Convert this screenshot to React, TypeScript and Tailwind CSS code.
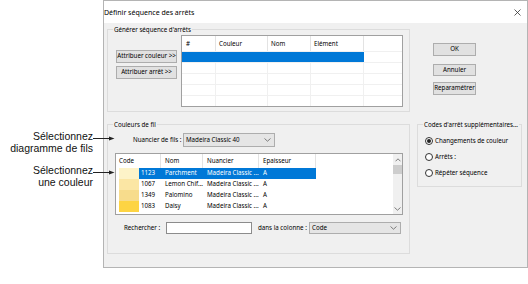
import React from "react";

function Chevron({ className = "" }: { className?: string }) {
  return (
    <svg width="7" height="4" viewBox="0 0 7 4" className={className}>
      <path d="M0.5 0.5 L3.5 3.2 L6.5 0.5" fill="none" stroke="#606060" strokeWidth="0.8" />
    </svg>
  );
}

function ChevronUp({ className = "" }: { className?: string }) {
  return (
    <svg width="6" height="4" viewBox="0 0 6 4" className={className}>
      <path d="M0.5 3.3 L3 0.8 L5.5 3.3" fill="none" stroke="#606060" strokeWidth="0.8" />
    </svg>
  );
}

function ArrowRight() {
  return (
    <svg width="22" height="5" viewBox="0 0 22 5" className="absolute left-full top-[5px]">
      <line x1="0" y1="2.5" x2="17" y2="2.5" stroke="#222" strokeWidth="1" />
      <path d="M16 0.5 L21.5 2.5 L16 4.5 Z" fill="#222" />
    </svg>
  );
}

function Group({
  label,
  className = "",
  children,
}: {
  label: string;
  className?: string;
  children?: React.ReactNode;
}) {
  return (
    <fieldset className={`border border-[#dcdcdc] min-w-0 ${className}`}>
      <legend className="ml-[5px] px-[1px] text-[6.2px] leading-[9px] text-black whitespace-nowrap">{label}</legend>
      {children}
    </fieldset>
  );
}

function Btn({ children, className = "" }: { children: React.ReactNode; className?: string }) {
  return (
    <div
      className={`flex items-center justify-center bg-[#e1e1e1] border border-[#adadad] text-[6.2px] leading-none text-black whitespace-nowrap ${className}`}
    >
      {children}
    </div>
  );
}

function Radio({ checked, label }: { checked?: boolean; label: string }) {
  return (
    <div className="h-[16px] flex items-center">
      <div className="w-[8px] h-[8px] rounded-full border border-[#333] bg-white flex items-center justify-center">
        {checked && <div className="w-[4px] h-[4px] rounded-full bg-[#222]" />}
      </div>
      <span className="ml-[2px] text-[6.2px] leading-none text-black whitespace-nowrap">{label}</span>
    </div>
  );
}

const topCols = [
  { w: "w-[34px]", label: "#", pl: "pl-[4px]" },
  { w: "w-[52px]", label: "Couleur", pl: "pl-[3px]" },
  { w: "w-[43px]", label: "Nom", pl: "pl-[3px]" },
  { w: "w-[53px]", label: "Elément", pl: "pl-[3px]" },
  { w: "w-[38px]", label: "", pl: "pl-[3px]" },
];

const threads = [
  { sw: "#fdf3c8", code: "1123", name: "Parchment", sel: true },
  { sw: "#fbe6a4", code: "1067", name: "Lemon Chif...", sel: false },
  { sw: "#f7dc8c", code: "1349", name: "Palomino", sel: false },
  { sw: "#fdd443", code: "1083", name: "Daisy", sel: false },
];

function Dialog() {
  return (
    <div className="w-[425px] h-[268px] shrink-0 border border-[#b4b4b4] bg-[#f0f0f0] flex flex-col">
      {/* title bar */}
      <div className="h-[22px] bg-white flex items-center justify-between pr-[6px] text-[7px] text-black">
        <span className="leading-none whitespace-nowrap">Définir séquence des arrêts</span>
        <svg width="7" height="7" viewBox="0 0 7 7">
          <path d="M0.5 0.5 L6.5 6.5 M6.5 0.5 L0.5 6.5" stroke="#333" strokeWidth="0.8" />
        </svg>
      </div>

      {/* body */}
      <div className="flex pl-[3px] pt-[2px]">
        {/* left column */}
        <div className="w-[303px] flex flex-col">
          <Group label="Générer séquence d'arrêts" className="h-[87px]">
            <div className="flex pl-[8px] pt-[1px]">
              <div className="w-[61px] flex flex-col gap-[3px] pt-[15px]">
                <Btn className="h-[13px]">Attribuer couleur &gt;&gt;</Btn>
                <Btn className="h-[13px]">Attribuer arrêt &gt;&gt;</Btn>
              </div>
              <div className="ml-[4px] w-[222px] h-[72px] border border-[#a0a0a0] bg-white flex flex-col">
                <div className="flex h-[15px]">
                  {topCols.map((c, i) => (
                    <div
                      key={i}
                      className={`${c.w} ${c.pl} h-full flex items-center text-[6.2px] text-black ${
                        i < 4 ? "border-r border-[#e3e3e3]" : ""
                      }`}
                    >
                      {c.label}
                    </div>
                  ))}
                </div>
                {[0, 1, 2, 3, 4].map((r) => (
                  <div key={r} className="flex h-[11px] border-t border-[#f0f0f0]">
                    {topCols.map((c, i) => (
                      <div
                        key={i}
                        className={`${c.w} h-full ${i < 4 ? "border-r" : ""} ${
                          r === 0 && i < 4 ? "bg-[#0078d7] border-[#0078d7]" : "border-[#f0f0f0]"
                        }`}
                      />
                    ))}
                  </div>
                ))}
              </div>
            </div>
          </Group>

          <Group label="Couleurs de fil" className="mt-[8px] h-[134px]">
            <div className="flex items-center mt-[4px] h-[14px] pl-[25px]">
              <span className="text-[6.2px] leading-none text-black w-[50px] whitespace-nowrap">Nuancier de fils :</span>
              <div className="w-[92px] h-[14px] bg-[#e5e5e5] border border-[#adadad] flex items-center justify-between pl-[2px] pr-[3px]">
                <span className="text-[6.2px] leading-none text-black whitespace-nowrap">Madeira Classic 40</span>
                <Chevron />
              </div>
            </div>

            <div className="ml-[7px] mt-[6px] w-[288px] h-[62px] border border-[#a0a0a0] bg-white flex">
              <div className="w-[277px] flex flex-col">
                <div className="flex h-[14px] text-[6.2px] text-black">
                  <div className="w-[45px] pl-[3px] flex items-center border-r border-[#e3e3e3]">Code</div>
                  <div className="w-[42px] pl-[4px] flex items-center border-r border-[#e3e3e3]">Nom</div>
                  <div className="w-[56px] pl-[4px] flex items-center border-r border-[#e3e3e3]">Nuancier</div>
                  <div className="w-[57px] pl-[4px] flex items-center border-r border-[#e3e3e3]">Epaisseur</div>
                </div>
                {threads.map((t) => (
                  <div key={t.code} className="flex h-[11px] text-[6.2px] leading-none">
                    <div className="w-[3px]" />
                    <div className="w-[20px] h-full" style={{ backgroundColor: t.sw }} />
                    <div
                      className={`flex h-full items-center ${
                        t.sel ? "bg-[#0078d7] text-white" : "text-black"
                      }`}
                    >
                      <div className="w-[22px] pl-[2px] whitespace-nowrap">{t.code}</div>
                      <div className="w-[42px] pl-[4px] whitespace-nowrap">{t.name}</div>
                      <div className="w-[56px] pl-[4px] whitespace-nowrap">Madeira Classic ...</div>
                      <div className="w-[57px] pl-[4px]">A</div>
                    </div>
                  </div>
                ))}
              </div>
              <div className="w-[9px] ml-auto bg-[#f0f0f0] flex flex-col items-center">
                <div className="h-[11px] flex items-center justify-center">
                  <ChevronUp />
                </div>
                <div className="w-[9px] h-[9px] bg-[#cdcdcd]" />
                <div className="flex-1" />
                <div className="h-[11px] flex items-center justify-center">
                  <Chevron />
                </div>
              </div>
            </div>

            <div className="flex items-center mt-[7px] h-[12px] pl-[16px]">
              <span className="text-[6.2px] leading-none text-black w-[42px] whitespace-nowrap">Rechercher :</span>
              <div className="w-[86px] h-[12px] bg-white border border-[#8c8c8c]" />
              <span className="ml-[6px] text-[6.2px] leading-none text-black w-[51px] whitespace-nowrap">dans la colonne :</span>
              <div className="w-[92px] h-[12px] bg-[#e5e5e5] border border-[#adadad] flex items-center justify-between pl-[2px] pr-[3px]">
                <span className="text-[6.2px] leading-none text-black">Code</span>
                <Chevron />
              </div>
            </div>
          </Group>
        </div>

        {/* right column */}
        <div className="ml-[7px] w-[105px] flex flex-col pt-[18px]">
          <div className="pl-[16px] flex flex-col">
            <Btn className="w-[43px] h-[13px] border-[#0078d7]">OK</Btn>
            <Btn className="w-[43px] h-[12px] mt-[8px]">Annuler</Btn>
            <Btn className="w-[43px] h-[13px] mt-[6px]">Reparamétrer</Btn>
          </div>
          <Group label="Codes d'arrêt supplémentaires..." className="mt-[25px] h-[67px]">
            <div className="pl-[7px] pt-[4px] flex flex-col">
              <Radio checked label="Changements de couleur" />
              <Radio label="Arrêts :" />
              <Radio label="Répéter séquence" />
            </div>
          </Group>
        </div>
      </div>
    </div>
  );
}

export default function App() {
  return (
    <div className="w-[528px] h-[284px] bg-white flex items-start overflow-hidden font-['Noto_Sans',sans-serif] text-black">
      <div className="w-[103px] shrink-0 flex flex-col items-end pr-[10px] pt-[131px] font-['Liberation_Sans',Arial,sans-serif] text-[10.5px] leading-[11.5px] text-[#111]">
        <div className="text-right">
          <div className="relative">
            Sélectionnez
            <ArrowRight />
          </div>
          <div>diagramme de fils</div>
        </div>
        <div className="text-right mt-[11px]">
          <div className="relative">
            Sélectionnez
            <ArrowRight />
          </div>
          <div>une couleur</div>
        </div>
      </div>
      <Dialog />
    </div>
  );
}
